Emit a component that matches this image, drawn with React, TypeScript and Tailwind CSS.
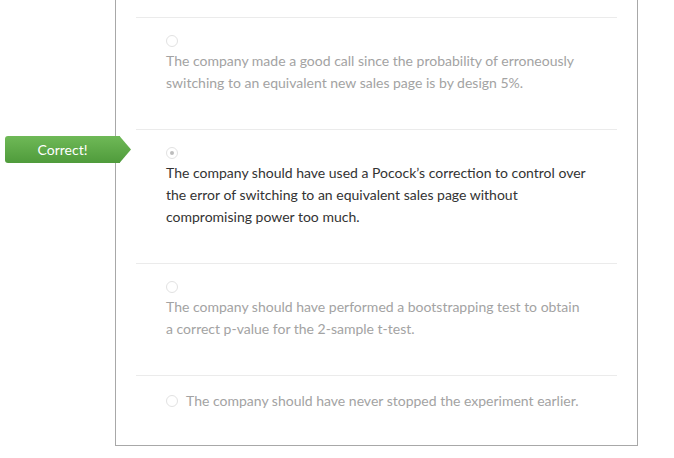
import type { ReactNode } from "react";

type Option = {
  text: string;
  selected?: boolean;
  inline?: boolean;
};

const options: Option[] = [
  {
    text: "The company made a good call since the probability of erroneously switching to an equivalent new sales page is by design 5%.",
  },
  {
    text: "The company should have used a Pocock\u2019s correction to control over the error of switching to an equivalent sales page without compromising power too much.",
    selected: true,
  },
  {
    text: "The company should have performed a bootstrapping test to obtain a correct p-value for the 2-sample t-test.",
  },
  {
    text: "The company should have never stopped the experiment earlier.",
    inline: true,
  },
];

function Radio({ selected }: { selected?: boolean }) {
  return (
    <span className="flex h-[12px] w-[12px] shrink-0 items-center justify-center rounded-full border border-[#e2e2e2] bg-white">
      {selected && <span className="h-[4px] w-[4px] rounded-full bg-[#bdbdbd]" />}
    </span>
  );
}

function CorrectBadge({ children }: { children: ReactNode }) {
  return (
    <div className="absolute left-[-131px] top-[6px] flex h-[27px] items-center">
      <div className="flex h-[27px] w-[115px] items-center justify-center rounded-l-[3px] bg-gradient-to-b from-[#6fb957] to-[#4f9b3b] text-[14px] text-white">
        {children}
      </div>
      <svg width="12" height="27" viewBox="0 0 12 27" className="-ml-px">
        <defs>
          <linearGradient id="arrowGrad" x1="0" y1="0" x2="0" y2="1">
            <stop offset="0" stopColor="#6fb957" />
            <stop offset="1" stopColor="#4f9b3b" />
          </linearGradient>
        </defs>
        <polygon points="0,0 0.5,0 12,13.5 0.5,27 0,27" fill="url(#arrowGrad)" />
      </svg>
    </div>
  );
}

export default function App() {
  return (
    <div className="min-h-[458px] bg-white font-['Lato','Liberation_Sans',sans-serif] text-[14px]">
      <div className="ml-[115px] w-[523px] border border-t-0 border-[#a8a8a8] px-[20px] pb-[33px] pt-[17px]">
        {options.map((o, i) => (
          <div key={i} className="relative border-t border-[#ebebeb]">
            {o.selected && <CorrectBadge>Correct!</CorrectBadge>}
            {o.inline ? (
              <div className="flex items-center gap-[8px] pl-[30px] pt-[14px] leading-[22px] text-[#a3a3a3]">
                <Radio />
                <span>{o.text}</span>
              </div>
            ) : (
              <div className="pb-[35px] pl-[30px] pt-[17px]">
                <Radio selected={o.selected} />
                <p
                  className={
                    "mt-[3px] w-[422px] leading-[22px] " +
                    (o.selected ? "text-[#333333]" : "text-[#a3a3a3]")
                  }
                >
                  {o.text}
                </p>
              </div>
            )}
          </div>
        ))}
      </div>
    </div>
  );
}
